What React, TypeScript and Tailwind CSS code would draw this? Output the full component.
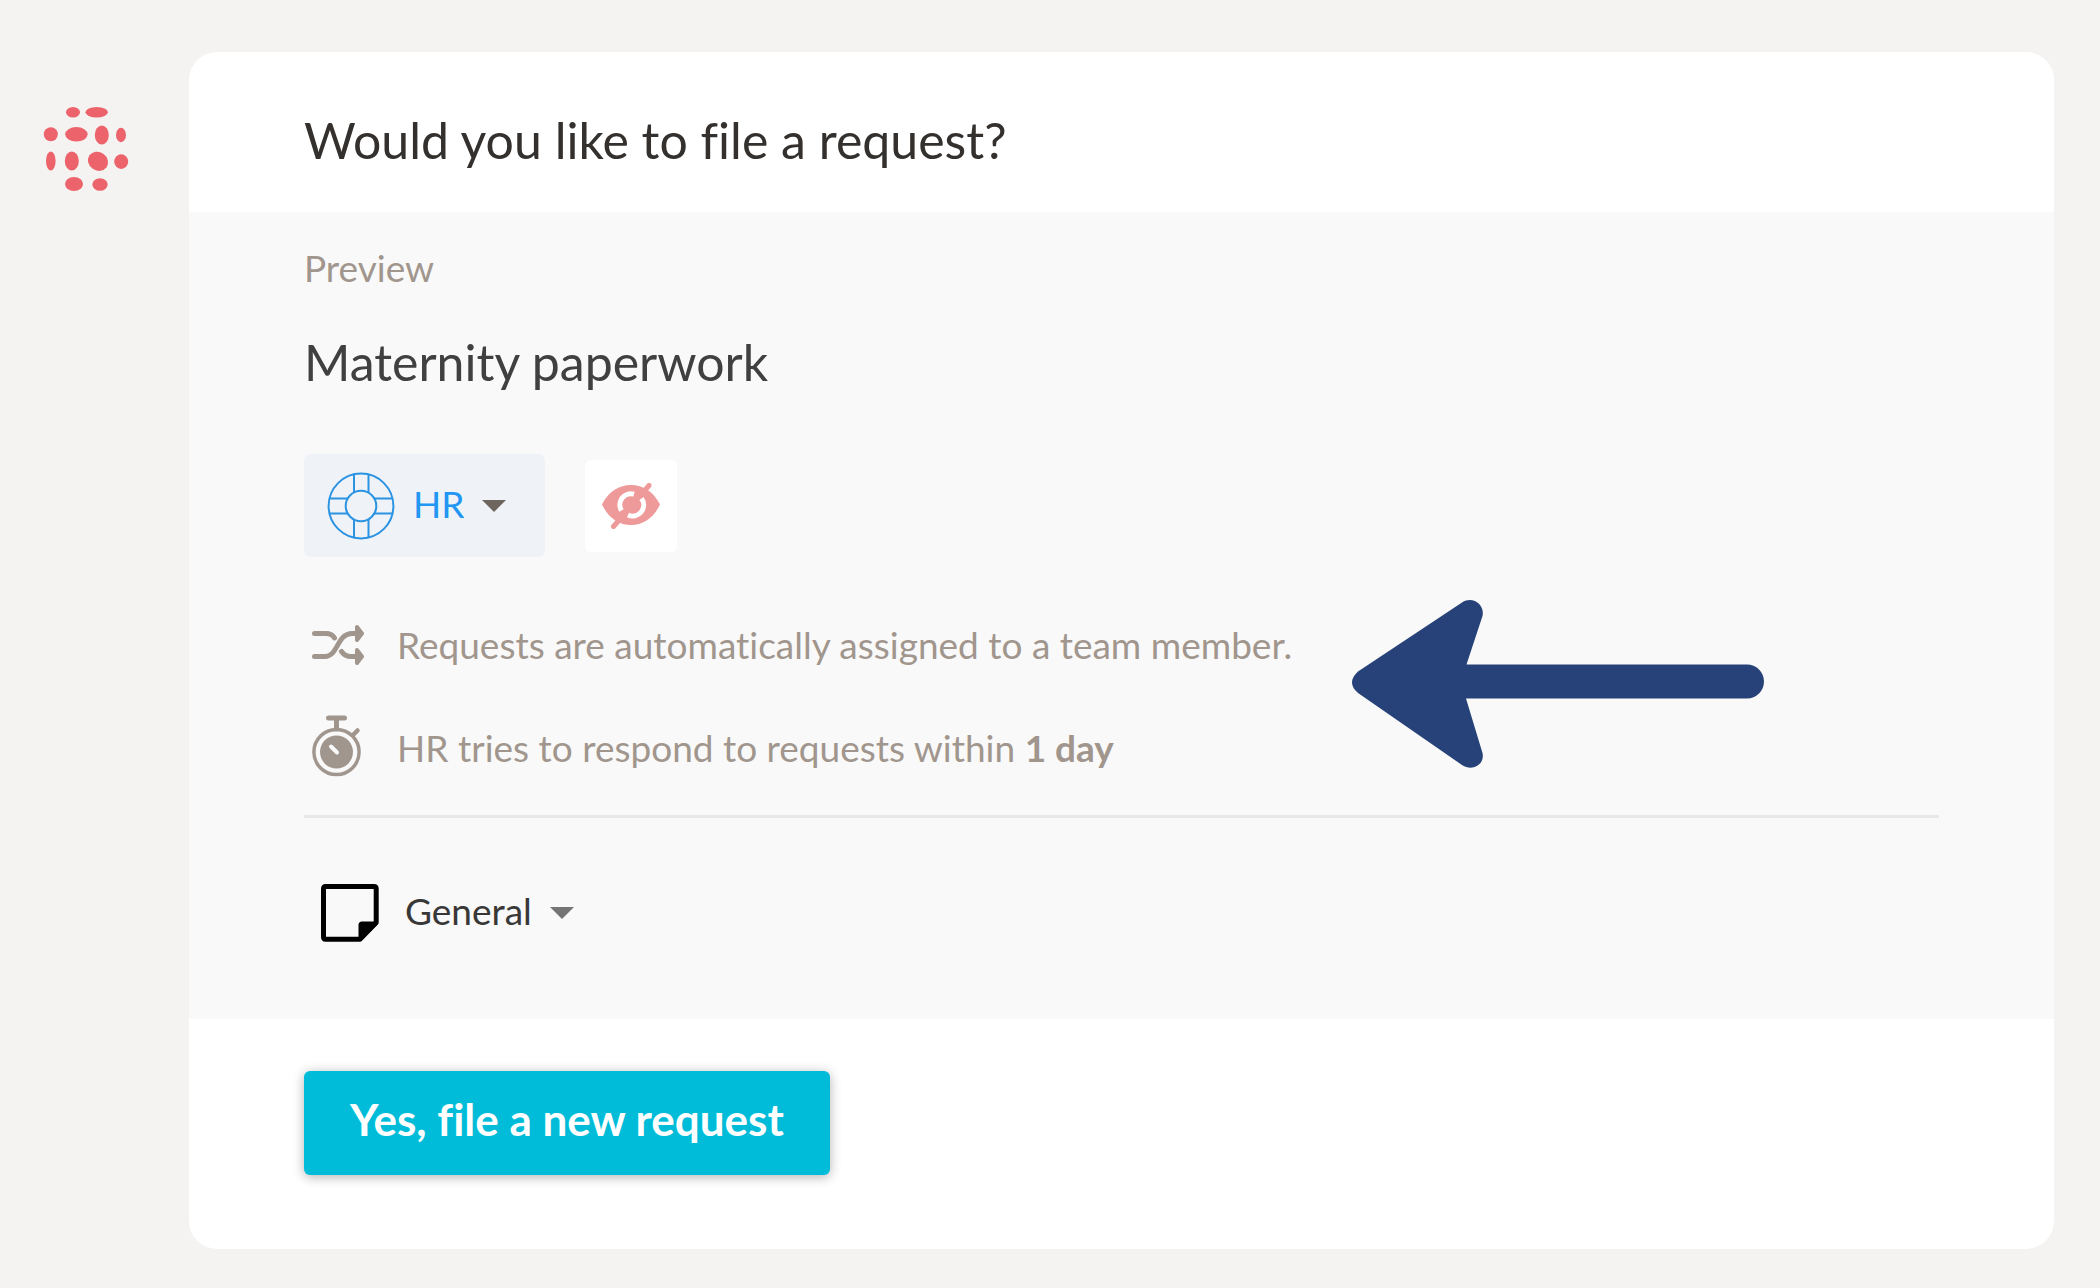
import { useState } from "react"

function Logo() {
  return (
    <svg viewBox="0 0 120 120" className="size-30 shrink-0 fill-[#ec636b]" aria-hidden="true">
      <ellipse cx="43" cy="22.3" rx="7" ry="5.3" />
      <ellipse cx="66.7" cy="22.3" rx="11.2" ry="5.3" />
      <circle cx="20.8" cy="44.3" r="7" />
      <ellipse cx="46.4" cy="44.3" rx="11.2" ry="7.3" />
      <ellipse cx="71.8" cy="45" rx="7" ry="9.5" />
      <ellipse cx="91" cy="45" rx="5" ry="7.2" />
      <ellipse cx="20.8" cy="71" rx="4.8" ry="9.5" />
      <ellipse cx="41.8" cy="71" rx="7" ry="9.5" />
      <ellipse cx="68" cy="71.3" rx="10.4" ry="9.2" transform="rotate(35 68 71.3)" />
      <ellipse cx="91.2" cy="71.6" rx="7" ry="7.3" />
      <ellipse cx="44" cy="94" rx="9" ry="7" />
      <ellipse cx="70" cy="94.5" rx="7.6" ry="6.3" />
    </svg>
  )
}

function LifeRing() {
  return (
    <svg viewBox="0 0 68 68" className="size-17 shrink-0 fill-none stroke-[#2b93e2] stroke-2" aria-hidden="true">
      <circle cx="34" cy="34" r="32.4" />
      <circle cx="34" cy="34" r="15.3" />
      <path d="M27 2.500V20.500M41.500 2.500V20.500M27 47.500V65.500M41.500 47.500V65.500" />
      <path d="M2.500 26.500H20.500M47.500 26.500H65.500M2.500 41.500H20.500M47.500 41.500H65.500" />
    </svg>
  )
}

function EyeSlash() {
  return (
    <svg viewBox="0 0 60 46" className="h-[46px] w-[60px] fill-[#ef9a9a]" aria-hidden="true">
      <path d="M1.500 22.500Q0.800 21.500 1.500 20.500C8 8.500 18 2 30 2S52 8.500 58.500 20.500Q59.200 21.500 58.500 22.500C52 35.500 42 42 30 42S8 35.500 1.500 22.500Z" />
      <path d="M12.500 43.500L48 2.500" stroke="#ef9a9a" strokeWidth="5" strokeLinecap="round" />
      <path d="M33 11.200A11 11 0 0 0 20.500 27.500" fill="none" stroke="#fff" strokeWidth="5" />
      <path d="M40.500 15.500A11 11 0 0 1 27 32" fill="none" stroke="#fff" strokeWidth="5" />
    </svg>
  )
}

function Shuffle() {
  return (
    <svg viewBox="0 0 52 42" className="h-[42px] w-[52px]" fill="none" stroke="#a1968d" strokeWidth="5" strokeLinecap="round" strokeLinejoin="round" aria-hidden="true">
      <path d="M2.500 9.500H14Q20 9.500 22.500 14" />
      <path d="M2.500 32.500H13C26 32.500 25 9.500 40 9.500H46" />
      <path d="M29.500 27.500Q33 32.500 39 32.500H46" />
      <path d="M45 3L50 9.500L45 16ZM45 26L50 32.500L45 39Z" fill="#a1968d" strokeWidth="4" />
    </svg>
  )
}

function Stopwatch() {
  return (
    <svg viewBox="0 2 50 62" className="h-[62px] w-[50px] overflow-visible" fill="none" stroke="#a1968d" strokeLinecap="round" aria-hidden="true">
      <circle cx="24.5" cy="37" r="22.6" strokeWidth="3.5" />
      <circle cx="24.5" cy="37" r="16.5" fill="#a1968d" stroke="none" />
      <path d="M16.500 3H32.500" strokeWidth="5" />
      <path d="M24.500 4V14" strokeWidth="5" />
      <path d="M41 20L45.500 15.500" strokeWidth="4.500" />
      <path d="M19 31.500L25 37.500" stroke="#f9f9f9" strokeWidth="4" />
    </svg>
  )
}

function Note() {
  return (
    <svg viewBox="0 0 58 58" className="size-[58px] shrink-0" aria-hidden="true">
      <path d="M39 55.200H4.500Q2.500 55.200 2.500 53V4.700Q2.500 2.500 4.700 2.500H53Q55.200 2.500 55.200 4.700V38.500Z" fill="none" stroke="#000" strokeWidth="5" strokeLinejoin="round" />
      <path d="M37.500 57V41Q37.500 37.500 41 37.500H57V40L40 57Z" />
    </svg>
  )
}

function Arrow() {
  return (
    <svg viewBox="0 0 412 168" className="pointer-events-none absolute top-[-21px] left-[1048px] h-[168px] w-[412px] fill-[#274278]" aria-hidden="true">
      <path d="M110 2.500C121 -4.500 133 5 130.500 16L114.500 64.500H395A17 17 0 0 1 395 98.500H114L130.500 153C133 164 121 172 110 165L6 93Q-6 82.500 6 71.500Z" />
    </svg>
  )
}

interface PickerProps {
  label: string
  options: string[]
  className: string
  caret: string
}

function Picker({ label, options, className, caret }: PickerProps) {
  const [value, setValue] = useState<string>(options[0])

  return (
    <span className="relative flex items-center">
      <select
        aria-label={label}
        value={value}
        onChange={(e) => setValue(e.target.value)}
        className={`field-sizing-content cursor-pointer appearance-none bg-transparent pr-[42px] pb-1 outline-none ${className}`}
      >
        {options.map((option) => (
          <option key={option}>{option}</option>
        ))}
      </select>
      <svg viewBox="0 0 24 12" className={`pointer-events-none absolute right-0 h-3 w-6 ${caret}`} aria-hidden="true">
        <path d="M0 0H24L12 12Z" />
      </svg>
    </span>
  )
}

export default function App() {
  const [hidden, setHidden] = useState<boolean>(true)

  return (
    <div className="flex min-h-screen items-start bg-[#f4f3f1] pt-[52px] pr-[46px] pb-10 pl-[30px] font-['Lato','Open_Sans',sans-serif] text-[37px] leading-12 [font-variant-ligatures:none]">
      <div className="mr-[39px] pt-[38px]">
        <Logo />
      </div>
      <main className="min-w-0 flex-1 overflow-hidden rounded-[28px] bg-white">
        <header className="px-[115px] pt-16 pb-12">
          <h1 className="text-[50px] leading-12 text-[#33302d]">Would you like to file a request?</h1>
        </header>

        <section className="bg-[#f9f9f9] px-[115px] pt-8 pb-[77px]">
          <p className="text-[#a1968d]">Preview</p>
          <h2 className="mt-[46px] text-[50px] leading-12 text-[#404040]">Maternity paperwork</h2>

          <div className="mt-[68px] flex items-center gap-10">
            <div className="flex h-[103px] items-center gap-[18px] rounded-md bg-[#eff3f8] pr-[39px] pl-[23px]">
              <LifeRing />
              <Picker label="Team" options={["HR"]} className="text-[#2196f3]" caret="fill-[#6d655e]" />
            </div>
            <button
              type="button"
              aria-label="Hide request"
              aria-pressed={hidden}
              onClick={() => setHidden(!hidden)}
              className="flex size-23 items-center justify-center rounded-md bg-white"
            >
              <EyeSlash />
            </button>
          </div>

          <div className="relative mt-16 border-b-[3px] border-[#e8e8e8] pb-[43px] text-[#a1968d]">
            <ul className="flex flex-col gap-[55px]">
              <li className="flex h-12 items-center">
                <span className="flex w-[93px] shrink-0 pl-2"><Shuffle /></span>
                Requests are automatically assigned to a team member.
              </li>
              <li className="flex h-12 items-center">
                <span className="flex w-[93px] shrink-0 pl-2"><Stopwatch /></span>
                <span>HR tries to respond to requests within <b>1 day</b></span>
              </li>
            </ul>
            <Arrow />
          </div>

          <div className="mt-[66px] flex items-center gap-[26px] pl-[17px]">
            <Note />
            <Picker label="Request type" options={["General"]} className="text-[#383838]" caret="fill-[#757575]" />
          </div>
        </section>

        <footer className="px-[115px] pt-13 pb-[74px]">
          <button
            type="button"
            className="flex h-[104px] items-center rounded-md bg-[#00bcd8] px-[46px] pb-2 text-[44px] font-bold text-white shadow-[0_2px_12px_rgba(0,0,0,0.3)]"
          >
            Yes, file a new request
          </button>
        </footer>
      </main>
    </div>
  )
}
